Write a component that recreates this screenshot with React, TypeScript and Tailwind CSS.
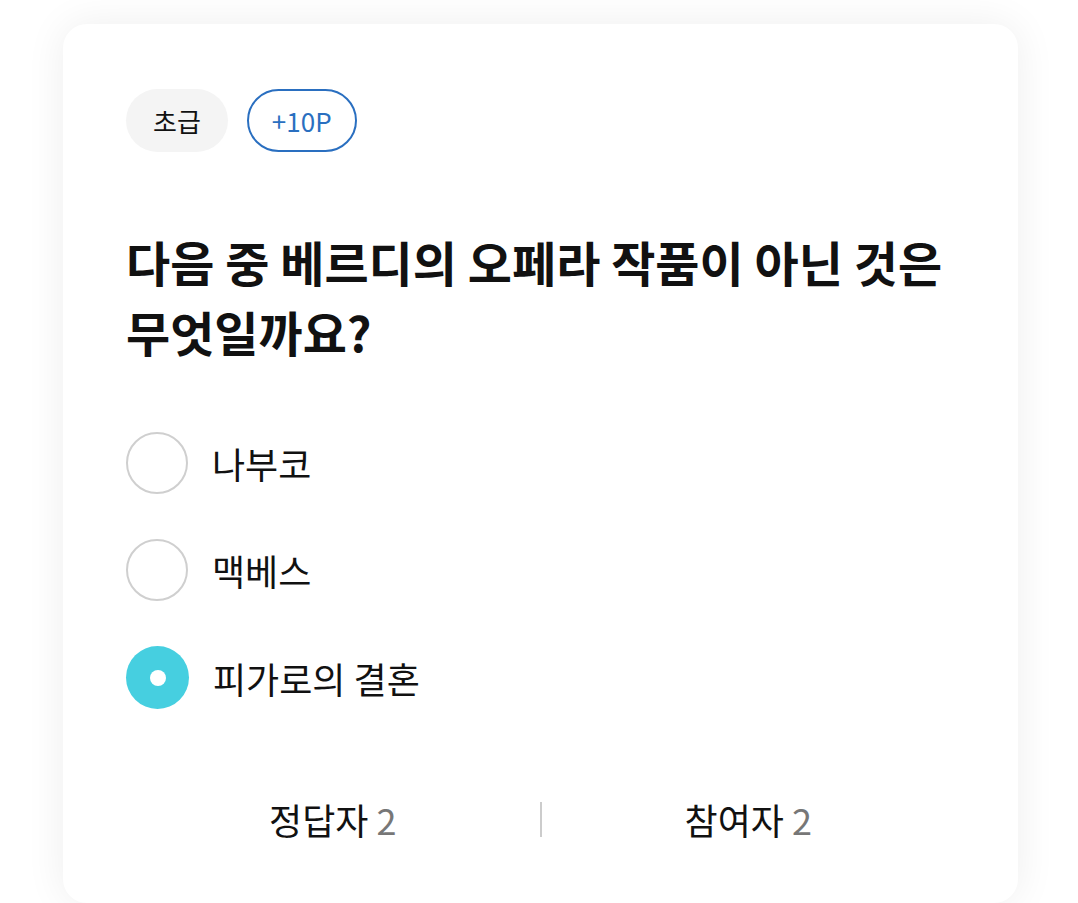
const font = { fontFamily: '"Noto Sans CJK KR", "Noto Sans", sans-serif' };

const options = [
  { label: "나부코", checked: false },
  { label: "맥베스", checked: false },
  { label: "피가로의 결혼", checked: true },
];

function Radio({ checked }: { checked: boolean }) {
  if (checked) {
    return (
      <span className="flex h-[63px] w-[63px] shrink-0 items-center justify-center rounded-full bg-[#46cfe0]">
        <span className="h-[16px] w-[16px] rounded-full bg-white" />
      </span>
    );
  }
  return <span className="h-[62px] w-[62px] shrink-0 rounded-full border-2 border-[#cfcfcf] bg-white" />;
}

export default function App() {
  return (
    <div className="min-h-screen bg-white pt-[24px]" style={font}>
      <div className="ml-[63px] w-[955px] rounded-[24px] bg-white px-[63px] pb-[60px] pt-[65px] shadow-[0_0_40px_rgba(0,0,0,0.07)]">
        <div className="flex gap-[19px]">
          <span className="flex h-[63px] items-center rounded-full bg-[#f4f4f4] px-[27px] text-[26px] text-[#111]">
            초급
          </span>
          <span className="flex h-[63px] items-center rounded-full border-2 border-[#2a6fc0] px-[23px] text-[26px] text-[#2a6fc0]">
            +10P
          </span>
        </div>

        <h1 className="mt-[74px] break-keep text-[48px] font-bold leading-[70px] text-[#111]">
          다음 중 베르디의 오페라 작품이 아닌 것은 무엇일까요?
        </h1>

        <div className="mt-[66px] flex flex-col gap-[45px]">
          {options.map((o) => (
            <label key={o.label} className="flex items-center gap-[24px]">
              <Radio checked={o.checked} />
              <span className="text-[36px] text-[#111]">{o.label}</span>
            </label>
          ))}
        </div>

        <div className="mt-[86px] flex items-center">
          <div className="flex-1 text-center text-[36px] leading-[48px] text-[#111]">
            정답자 <span className="text-[#777]">2</span>
          </div>
          <div className="h-[35px] w-[2px] bg-[#cccccc]" />
          <div className="flex-1 text-center text-[36px] leading-[48px] text-[#111]">
            참여자 <span className="text-[#777]">2</span>
          </div>
        </div>
      </div>
    </div>
  );
}
